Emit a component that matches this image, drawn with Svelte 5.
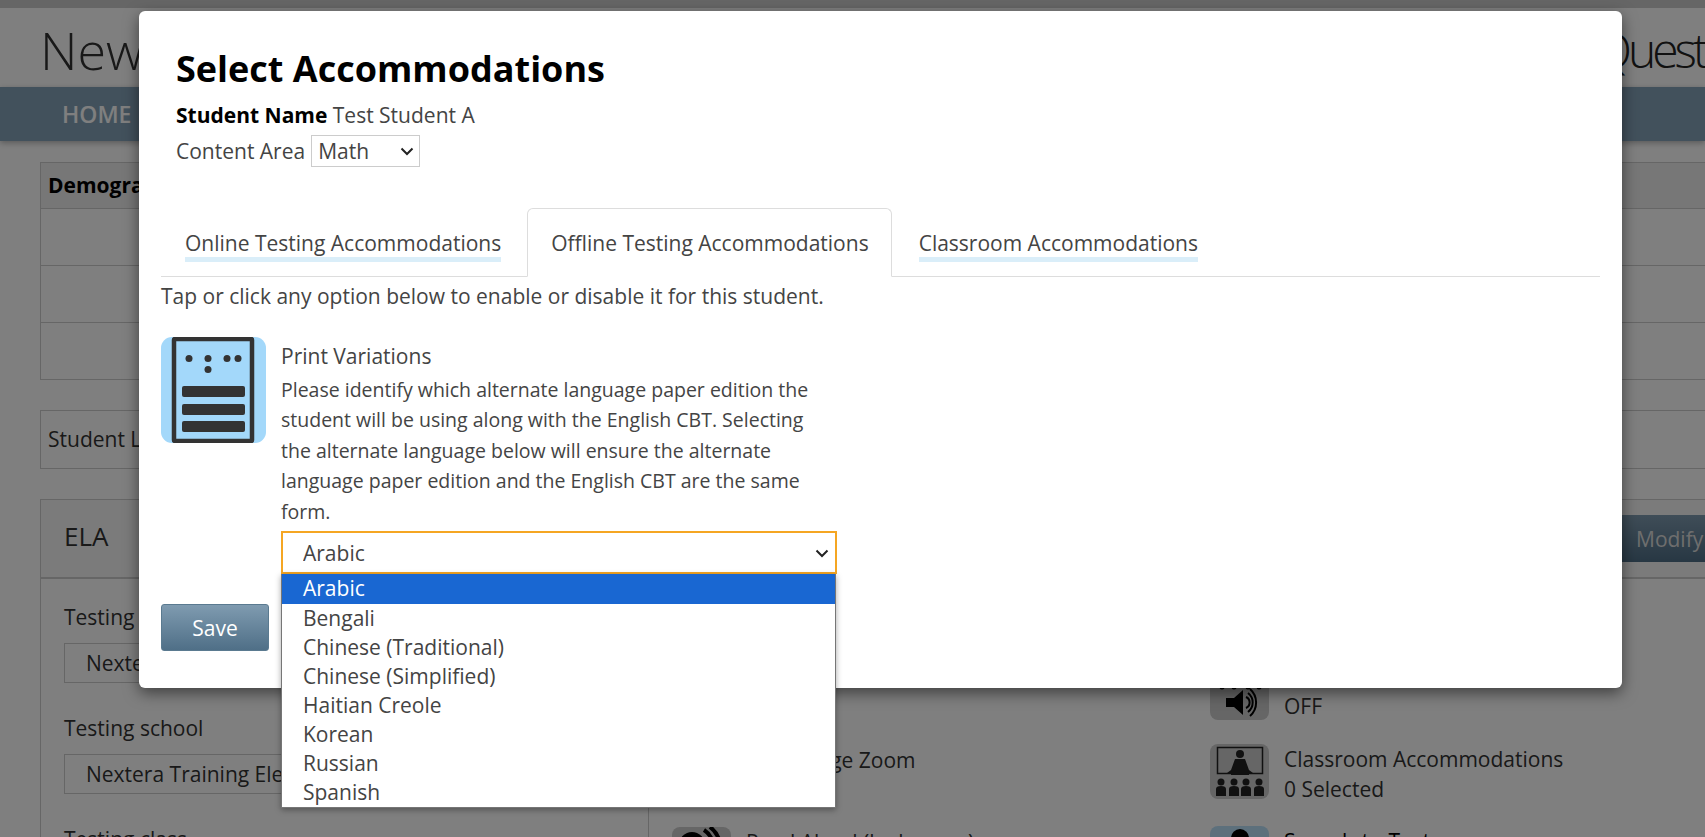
<script>
  const options = ['Arabic', 'Bengali', 'Chinese (Traditional)', 'Chinese (Simplified)', 'Haitian Creole', 'Korean', 'Russian', 'Spanish']
  const tabs = [
    { label: 'Online Testing Accommodations', active: false },
    { label: 'Offline Testing Accommodations', active: true },
    { label: 'Classroom Accommodations', active: false },
  ]
</script>

<div class="page">
  <div class="strip"></div>
  <header class="top">
    <span class="brand">New</span>
    <span class="brand quest">Quest</span>
  </header>
  <nav class="nav"><span>HOME</span></nav>

  <main class="content">
    <div class="table">
      <div class="thead">Demographics</div>
      <div class="trow"></div>
      <div class="trow"></div>
      <div class="trow"></div>
    </div>

    <div class="lang-box">Student Language</div>

    <section class="panel">
      <div class="panel-head">
        <span class="panel-title">ELA</span>
        <button class="modify">Modify</button>
      </div>
      <div class="panel-body">
        <div class="col-left">
          <div class="field-label">Testing district</div>
          <div class="fake-select">Nextera Training District</div>
          <div class="field-label">Testing school</div>
          <div class="fake-select">Nextera Training Elementary</div>
          <div class="field-label">Testing class</div>
        </div>
        <div class="col-mid">
          <div class="acc zoom">
            <div class="acc-icon"></div>
            <div class="acc-text">Large Page Zoom</div>
          </div>
          <div class="acc">
            <div class="acc-icon">
              <svg viewBox="0 0 60 60" width="60" height="60">
                <circle cx="20" cy="18" r="13" fill="#000" />
                <path d="M32 3a20 20 0 0 1 9 14M38 0a26 26 0 0 1 10 17" fill="none" stroke="#000" stroke-width="4" />
              </svg>
            </div>
            <div class="acc-text">Read Aloud (by human)</div>
          </div>
        </div>
        <div class="col-right">
          <div class="acc sound">
            <div class="acc-icon">
              <svg viewBox="0 0 60 55" width="60" height="55">
                <g fill="#000">
                  <circle cx="12" cy="22" r="2.500" />
                  <circle cx="24" cy="22" r="2.500" />
                  <circle cx="38" cy="22" r="2.500" />
                  <circle cx="49" cy="22" r="2.500" />
                </g>
                <path d="M16 33h8l9-8v25l-9-8h-8z" fill="#000" />
                <path d="M36 32a6 6 0 0 1 0 11M38 28a12 12 0 0 1 0 19M40 24a18 18 0 0 1 0 27" fill="none" stroke="#000" stroke-width="2" />
              </svg>
            </div>
            <div class="acc-text">OFF</div>
          </div>
          <div class="acc classroom">
            <div class="acc-icon">
              <svg viewBox="0 0 60 55" width="60" height="55">
                <rect x="7.500" y="3.500" width="45" height="26" fill="none" stroke="#222" stroke-width="1.500" />
                <circle cx="30" cy="10" r="4" fill="#222" />
                <path d="M25 15h10l4 11 4 3h-4v2H21v-2h-4l4-3z" fill="#222" />
                <g fill="#222">
                  <circle cx="11" cy="38" r="3.500" /><path d="M6 52v-7q0-3 5-3t5 3v7z" />
                  <circle cx="24" cy="38" r="3.500" /><path d="M19 52v-7q0-3 5-3t5 3v7z" />
                  <circle cx="36" cy="38" r="3.500" /><path d="M31 52v-7q0-3 5-3t5 3v7z" />
                  <circle cx="49" cy="38" r="3.500" /><path d="M44 52v-7q0-3 5-3t5 3v7z" />
                </g>
              </svg>
            </div>
            <div class="acc-text">Classroom Accommodations<br />0 Selected</div>
          </div>
          <div class="acc speech">
            <div class="acc-icon">
              <svg viewBox="0 0 60 60" width="60" height="60">
                <circle cx="30" cy="12" r="9" fill="#000" />
              </svg>
            </div>
            <div class="acc-text strong">Speech-to-Text</div>
          </div>
        </div>
      </div>
    </section>
  </main>

  <div class="overlay"></div>

  <div class="modal">
    <div class="modal-head">
      <h1>Select Accommodations</h1>
      <div class="name"><b>Student Name</b> Test Student A</div>
      <div class="area">
        <label for="area">Content Area</label>
        <div class="select-wrap small">
          <select id="area"><option>Math</option></select>
          <svg viewBox="0 0 14 9" width="14" height="9"><path d="M1.500 1.500 7 7l5.500-5.500" fill="none" stroke="#222" stroke-width="2" /></svg>
        </div>
      </div>
    </div>

    <div class="modal-body">
      <ul class="tabs">
        {#each tabs as tab}
          <li class:active={tab.active}><span>{tab.label}</span></li>
        {/each}
      </ul>
      <p class="hint">Tap or click any option below to enable or disable it for this student.</p>

      <div class="option">
        <svg class="print-icon" viewBox="0 0 105 106" width="105" height="106">
          <rect width="105" height="106" rx="11" fill="#a3d8fa" />
          <rect x="13" y="2" width="78" height="102" rx="1" fill="none" stroke="#333" stroke-width="4.500" />
          <g fill="#333">
            <circle cx="28" cy="21.500" r="3.500" />
            <circle cx="47" cy="21.500" r="3.500" />
            <circle cx="47" cy="32.500" r="3.500" />
            <circle cx="66" cy="21.500" r="3.500" />
            <circle cx="77" cy="21.500" r="3.500" />
            <rect x="21" y="49" width="63" height="11" rx="2" />
            <rect x="21" y="67" width="63" height="11" rx="2" />
            <rect x="21" y="84" width="63" height="11" rx="2" />
          </g>
        </svg>
        <div class="option-text">
          <div class="option-title">Print Variations</div>
          <p>Please identify which alternate language paper edition the student will be using along with the English CBT. Selecting the alternate language below will ensure the alternate language paper edition and the English CBT are the same form.</p>
          <div class="picker">
            <div class="select-wrap">
              <select class="print-select"><option>Arabic</option></select>
              <svg viewBox="0 0 14 9" width="14" height="9"><path d="M1.500 1.500 7 7l5.500-5.500" fill="none" stroke="#222" stroke-width="2" /></svg>
            </div>
            <ul class="dropdown">
              {#each options as opt, i}
                <li class:selected={i === 0}>{opt}</li>
              {/each}
            </ul>
          </div>
        </div>
      </div>

      <button class="save">Save</button>
    </div>
  </div>
</div>

<style>
  :global(body) {
    margin: 0;
    overflow: hidden;
    font-family: 'Open Sans', sans-serif;
    color: #333;
  }

  .page {
    position: relative;
    width: 1705px;
    height: 837px;
    overflow: hidden;
    background: #fff;
  }
  .strip {
    height: 8px;
    background: #ccc;
  }
  .top {
    height: 79px;
    display: flex;
    justify-content: space-between;
    padding-left: 40px;
    font-weight: 300;
  }
  .brand {
    font-size: 52px;
    line-height: 83px;
    color: #333;
  }
  .quest {
    font-size: 48px;
    letter-spacing: -4px;
    color: #222;
  }
  .nav {
    height: 54px;
    background: #84a3b8;
    box-shadow: 0 2px 6px rgba(0, 0, 0, 0.3);
    display: flex;
    align-items: center;
    padding-left: 62px;
    font-size: 23px;
    font-weight: 600;
    color: #fff;
  }

  .content {
    box-sizing: border-box;
    padding: 21px 0 0 40px;
    width: 1705px;
    font-size: 21px;
  }
  .table {
    border: 1px solid #ccc;
    border-right: 0;
  }
  .thead {
    height: 45px;
    line-height: 44px;
    padding-left: 7px;
    font-weight: 700;
    color: #000;
    background: #eee;
    border-bottom: 1px solid #ccc;
  }
  .trow {
    height: 56px;
    border-bottom: 1px solid #ccc;
  }
  .trow:last-child {
    border-bottom: 0;
  }
  .lang-box {
    margin-top: 30px;
    height: 57px;
    line-height: 57px;
    padding-left: 7px;
    border: 1px solid #ccc;
    border-right: 0;
  }

  .panel {
    margin-top: 30px;
    border: 1px solid #ccc;
    border-right: 0;
  }
  .panel-head {
    height: 77px;
    display: flex;
    align-items: center;
    justify-content: space-between;
    padding-left: 23px;
    background: #f7f7f7;
    font-size: 26px;
    border-bottom: 2px solid #ccc;
  }
  .panel-title {
    margin-top: -6px;
  }
  .modify {
    width: 100px;
    height: 47px;
    padding: 0 0 0 31px;
    border: 0;
    color: #ddd;
    font: 21px 'Open Sans', sans-serif;
    text-align: left;
    background: linear-gradient(#7f9bb0, #4f6f87);
  }
  .panel-body {
    display: grid;
    grid-template-columns: 608px 561px 1fr;
  }
  .col-left {
    padding: 23px 0 0 23px;
    border-right: 1px solid #ccc;
  }
  .field-label {
    line-height: 30px;
    margin-bottom: 11px;
  }
  .fake-select {
    width: 520px;
    height: 38px;
    line-height: 38px;
    margin-bottom: 30px;
    padding-left: 21px;
    border: 1px solid #ccc;
  }
  .col-mid {
    padding: 166px 0 0 23px;
  }
  .col-right {
    padding: 86px 0 0 0;
  }
  .acc {
    display: flex;
    gap: 15px;
    line-height: 30px;
    color: #333;
  }
  .acc-icon {
    flex: none;
    width: 59px;
    height: 55px;
    border-radius: 8px;
    background: #ccc;
    overflow: hidden;
  }
  .acc-icon svg {
    display: block;
  }
  .acc.zoom {
    height: 82px;
  }
  .acc.sound {
    margin-bottom: 23px;
  }
  .acc.sound .acc-text {
    padding-top: 26px;
  }
  .acc.classroom {
    margin-bottom: 22px;
  }
  .acc.speech .acc-icon {
    background: #bbe1f9;
  }
  .strong {
    color: #000;
  }

  .overlay {
    position: absolute;
    inset: 0;
    background: rgba(0, 0, 0, 0.5);
  }

  .modal {
    position: absolute;
    top: 11px;
    left: 139px;
    width: 1483px;
    height: 677px;
    border-radius: 6px;
    background: #fff;
    box-shadow: 0 5px 15px rgba(0, 0, 0, 0.5);
  }
  .modal-head {
    padding: 36px 0 0 37px;
  }
  h1 {
    margin: 0;
    font-size: 36px;
    line-height: 44px;
    font-weight: 700;
    color: #000;
  }
  .name {
    margin-top: 9px;
    font-size: 21px;
    line-height: 30px;
    color: #444;
  }
  .name b {
    color: #000;
  }
  .area {
    margin-top: 5px;
    display: flex;
    align-items: center;
    gap: 6px;
    font-size: 21px;
    color: #444;
  }
  .select-wrap {
    position: relative;
  }
  .select-wrap svg {
    position: absolute;
    right: 8px;
    top: 50%;
    margin-top: -4px;
    pointer-events: none;
  }
  .select-wrap.small svg {
    right: 6px;
  }
  select {
    appearance: none;
    display: block;
    box-sizing: border-box;
    font: 21px 'Open Sans', sans-serif;
    color: #444;
    background: #fff;
    border-radius: 0;
    outline: none;
  }
  #area {
    width: 109px;
    height: 32px;
    padding: 0 0 0 6px;
    border: 1px solid #ccc;
  }

  .modal-body {
    padding: 41px 22px 0;
  }
  .tabs {
    display: flex;
    gap: 3px;
    height: 68px;
    margin: 0;
    padding: 0;
    list-style: none;
    border-bottom: 1px solid #ddd;
    font-size: 21px;
    color: #444;
  }
  .tabs li {
    box-sizing: border-box;
    height: 69px;
    padding: 20px 22px 0 23px;
    border: 1px solid transparent;
    border-radius: 6px 6px 0 0;
  }
  .tabs li span {
    display: block;
    line-height: 28px;
    border-bottom: 5px solid #daeef9;
  }
  .tabs li.active {
    background: #fff;
    border-color: #ddd;
    border-bottom-color: #fff;
  }
  .tabs li.active span {
    border-bottom-color: transparent;
  }
  .hint {
    margin: 4px 0 0;
    font-size: 21px;
    line-height: 30px;
    color: #444;
  }
  .option {
    display: flex;
    gap: 15px;
    margin-top: 26px;
  }
  .print-icon {
    flex: none;
  }
  .option-text {
    width: 556px;
  }
  .option-title {
    font-size: 21px;
    line-height: 38px;
    color: #444;
  }
  .option-text p {
    margin: 0;
    width: 540px;
    font-size: 19.500px;
    line-height: 30.400px;
    color: #444;
  }
  .picker {
    position: relative;
    margin-top: 4px;
  }
  .print-select {
    width: 100%;
    height: 43px;
    padding: 0 0 0 20px;
    border: 2px solid #f5a623;
  }
  .dropdown {
    position: absolute;
    top: 100%;
    left: 0;
    right: 1px;
    margin: 0;
    padding: 0;
    list-style: none;
    background: #fff;
    border: 1px solid #767676;
    border-top: 0;
    box-shadow: 0 2px 6px rgba(0, 0, 0, 0.35);
    font-size: 21px;
    color: #444;
  }
  .dropdown li {
    height: 29px;
    line-height: 29px;
    padding-left: 21px;
  }
  .dropdown li.selected {
    background: #1967d2;
    color: #fff;
    height: 30px;
  }
  .save {
    display: block;
    width: 108px;
    height: 47px;
    margin-top: 30px;
    padding: 0;
    border: 1px solid #5a7a90;
    border-radius: 3px;
    background: linear-gradient(#7f9bb0, #4f6f87);
    color: #fff;
    font: 21px 'Open Sans', sans-serif;
  }
</style>
